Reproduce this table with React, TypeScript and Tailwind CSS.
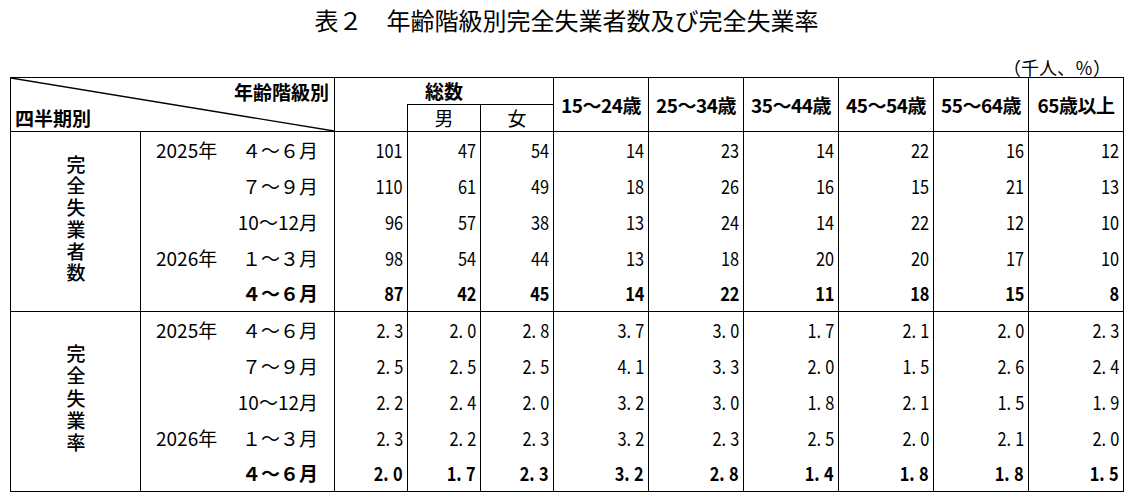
import React from "react";

type Row = { year: string; month: string; v: string[]; bold?: boolean };

const persons: Row[] = [
  { year: "2025年", month: "４～６月", v: ["101", "47", "54", "14", "23", "14", "22", "16", "12"] },
  { year: "", month: "７～９月", v: ["110", "61", "49", "18", "26", "16", "15", "21", "13"] },
  { year: "", month: "10～12月", v: ["96", "57", "38", "13", "24", "14", "22", "12", "10"] },
  { year: "2026年", month: "１～３月", v: ["98", "54", "44", "13", "18", "20", "20", "17", "10"] },
  { year: "", month: "４～６月", v: ["87", "42", "45", "14", "22", "11", "18", "15", "8"], bold: true },
];

const rates: Row[] = [
  { year: "2025年", month: "４～６月", v: ["2.3", "2.0", "2.8", "3.7", "3.0", "1.7", "2.1", "2.0", "2.3"] },
  { year: "", month: "７～９月", v: ["2.5", "2.5", "2.5", "4.1", "3.3", "2.0", "1.5", "2.6", "2.4"] },
  { year: "", month: "10～12月", v: ["2.2", "2.4", "2.0", "3.2", "3.0", "1.8", "2.1", "1.5", "1.9"] },
  { year: "2026年", month: "１～３月", v: ["2.3", "2.2", "2.3", "3.2", "2.3", "2.5", "2.0", "2.1", "2.0"] },
  { year: "", month: "４～６月", v: ["2.0", "1.7", "2.3", "3.2", "2.8", "1.4", "1.8", "1.8", "1.5"], bold: true },
];

const ages = ["15～24歳", "25～34歳", "35～44歳", "45～54歳", "55～64歳", "65歳以上"];

function Num({ value }: { value: string }) {
  const [a, b] = value.split(".");
  return (
    <span className="inline-block origin-right scale-x-[0.86]">
      {b === undefined ? (
        a
      ) : (
        <>
          {a}.<span className="ml-[5px]">{b}</span>
        </>
      )}
    </span>
  );
}

function Section({ label, rows, tracking }: { label: string; rows: Row[]; tracking: string }) {
  return (
    <>
      {rows.map((r, i) => (
        <tr key={i} className={"h-[36px] " + (i === 0 ? "border-t border-black" : "")}>
          {i === 0 && (
            <td rowSpan={rows.length} className="border border-black align-middle text-center p-0">
              <span className={"inline-block [writing-mode:vertical-rl] font-medium text-[19px] leading-[24px] " + tracking}>
                {label}
              </span>
            </td>
          )}
          <td className="border-x border-black p-0">
            <div className={"flex justify-between pl-[15px] pr-[16px] " + (r.bold ? "font-bold" : "")}>
              <span className="font-normal">{r.year}</span>
              <span>{r.month}</span>
            </div>
          </td>
          {r.v.map((x, k) => (
            <td key={k} className={"border-x border-black text-right pr-[4px] " + (r.bold ? "font-bold" : "")}>
              <Num value={x} />
            </td>
          ))}
        </tr>
      ))}
    </>
  );
}

export default function App() {
  return (
    <div className='w-[1137px] h-[500px] bg-white text-black font-["Noto_Sans_CJK_JP",sans-serif]'>
      <div className="w-[1133px] h-[40px] leading-[40px] text-center text-[24px]">
        表２　年齢階級別完全失業者数及び完全失業率
      </div>
      <div className="w-[1111px] mt-[17px] h-[20px] leading-[20px] text-right text-[18px]">
        （千人、％）
      </div>
      <table className="ml-[10px] w-[1113px] table-fixed border-collapse border border-black text-[19px] leading-[22px]">
        <colgroup>
          <col className="w-[130px]" />
          <col className="w-[194px]" />
          <col className="w-[73px]" />
          <col className="w-[73px]" />
          <col className="w-[73px]" />
          {ages.map((a) => (
            <col key={a} className="w-[95px]" />
          ))}
        </colgroup>
        <thead>
          <tr className="h-[26px]">
            <td colSpan={2} rowSpan={2} className="relative border border-black p-0">
              <svg className="absolute inset-0 w-full h-full" preserveAspectRatio="none" viewBox="0 0 100 100">
                <line x1="0" y1="0" x2="100" y2="100" stroke="black" strokeWidth="1.4" vectorEffect="non-scaling-stroke" />
              </svg>
              <div className="flex flex-col font-bold text-[19px]">
                <span className="text-right pr-[5px] leading-[26px]">年齢階級別</span>
                <span className="text-left pl-[4px] leading-[26px]">四半期別</span>
              </div>
            </td>
            <td colSpan={3} className="border-x border-t border-black text-center font-bold p-0 leading-[26px]">
              総数
            </td>
            {ages.map((a) => (
              <td key={a} rowSpan={2} className="border border-black text-center font-bold p-0 whitespace-nowrap tracking-[-0.5px]">
                {a}
              </td>
            ))}
          </tr>
          <tr className="h-[26px]">
            <td className="border-l border-black p-0" />
            <td className="border border-black text-center p-0 leading-[26px]">男</td>
            <td className="border border-black text-center p-0 leading-[26px]">女</td>
          </tr>
        </thead>
        <tbody>
          <Section label="完全失業者数" rows={persons} tracking="tracking-[2.7px]" />
          <Section label="完全失業率" rows={rates} tracking="tracking-[3.4px]" />
        </tbody>
      </table>
    </div>
  );
}
